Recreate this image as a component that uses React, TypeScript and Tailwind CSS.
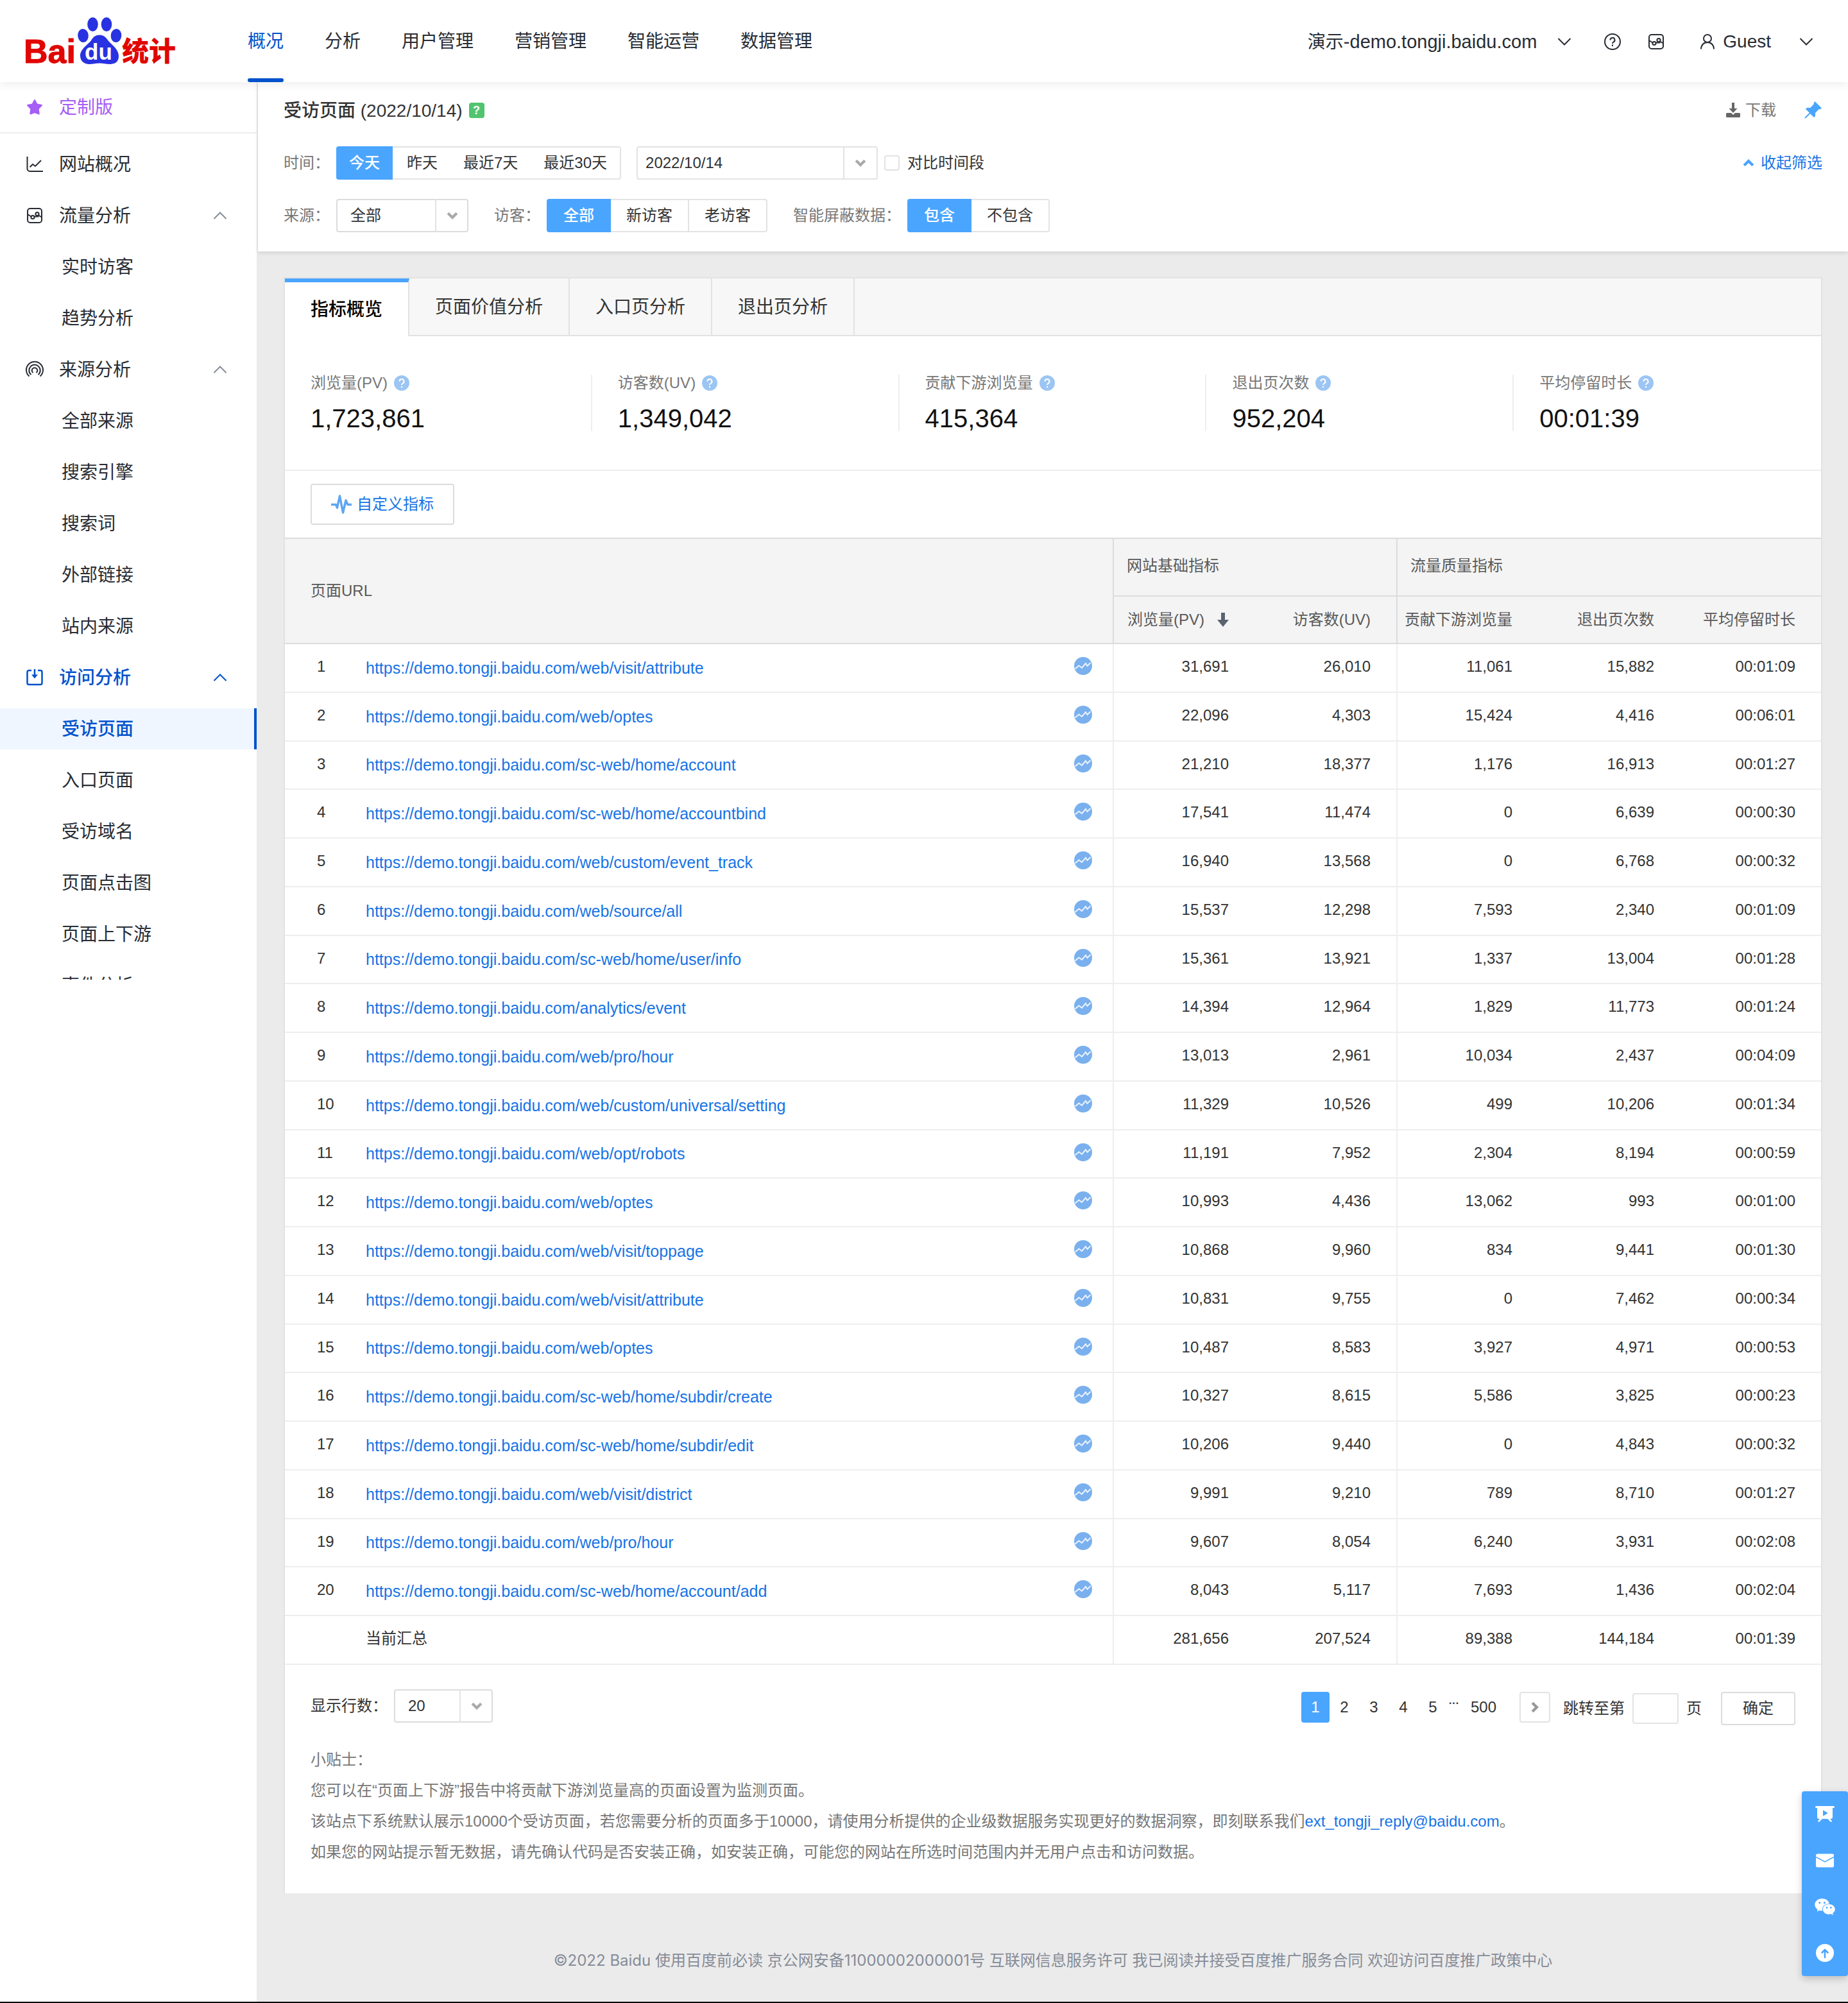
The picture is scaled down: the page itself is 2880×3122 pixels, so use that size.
import React from "react";
import { BsPinAngleFill } from "react-icons/bs";
import { AiFillWechat } from "react-icons/ai";

const topNav = ["概况", "分析", "用户管理", "营销管理", "智能运营", "数据管理"];

const rows: [string, string, string, string, string, string][] = [
  ["web/visit/attribute", "31,691", "26,010", "11,061", "15,882", "00:01:09"],
  ["web/optes", "22,096", "4,303", "15,424", "4,416", "00:06:01"],
  ["sc-web/home/account", "21,210", "18,377", "1,176", "16,913", "00:01:27"],
  ["sc-web/home/accountbind", "17,541", "11,474", "0", "6,639", "00:00:30"],
  ["web/custom/event_track", "16,940", "13,568", "0", "6,768", "00:00:32"],
  ["web/source/all", "15,537", "12,298", "7,593", "2,340", "00:01:09"],
  ["sc-web/home/user/info", "15,361", "13,921", "1,337", "13,004", "00:01:28"],
  ["analytics/event", "14,394", "12,964", "1,829", "11,773", "00:01:24"],
  ["web/pro/hour", "13,013", "2,961", "10,034", "2,437", "00:04:09"],
  ["web/custom/universal/setting", "11,329", "10,526", "499", "10,206", "00:01:34"],
  ["web/opt/robots", "11,191", "7,952", "2,304", "8,194", "00:00:59"],
  ["web/optes", "10,993", "4,436", "13,062", "993", "00:01:00"],
  ["web/visit/toppage", "10,868", "9,960", "834", "9,441", "00:01:30"],
  ["web/visit/attribute", "10,831", "9,755", "0", "7,462", "00:00:34"],
  ["web/optes", "10,487", "8,583", "3,927", "4,971", "00:00:53"],
  ["sc-web/home/subdir/create", "10,327", "8,615", "5,586", "3,825", "00:00:23"],
  ["sc-web/home/subdir/edit", "10,206", "9,440", "0", "4,843", "00:00:32"],
  ["web/visit/district", "9,991", "9,210", "789", "8,710", "00:01:27"],
  ["web/pro/hour", "9,607", "8,054", "6,240", "3,931", "00:02:08"],
  ["sc-web/home/account/add", "8,043", "5,117", "7,693", "1,436", "00:02:04"],
];

const summary = ["281,656", "207,524", "89,388", "144,184", "00:01:39"];

const stats = [
  ["浏览量(PV)", "1,723,861"],
  ["访客数(UV)", "1,349,042"],
  ["贡献下游浏览量", "415,364"],
  ["退出页次数", "952,204"],
  ["平均停留时长", "00:01:39"],
];

function Logo() {
  return (
    <svg viewBox="0 0 240 80" className="h-20 w-60 overflow-visible" aria-label="Baidu统计">
      <text x="-3" y="78" fontSize="52" fontWeight="700" fontFamily="Liberation Sans, sans-serif" fill="#e10602" stroke="#e10602">Bai</text>
      <g fill="#2932e1">
        <ellipse cx="89.500" cy="35.500" rx="8.300" ry="10.500" transform="rotate(-5 89.500 35.500)" />
        <ellipse cx="104.500" cy="18" rx="8.300" ry="11" />
        <ellipse cx="126" cy="18" rx="8.300" ry="11" />
        <ellipse cx="141" cy="35.500" rx="8.300" ry="10.500" transform="rotate(5 141 35.500)" />
        <path d="M115 34.500c7 0 10 4 13 8 4 6 17 13 17 25 0 9-6 12.500-14 12.500-6 0-10-1.500-16-1.500s-10 1.500-16 1.500c-8 0-14-5-14-13 0-11 13-18 17-24 3-4.500 6-8.500 13-8.500z" />
      </g>
      <text x="92" y="73" fontSize="35" fontWeight="700" fontFamily="Liberation Sans, sans-serif" fill="#fff">du</text>
      <text x="150" y="75" fontSize="42" fontWeight="900" fontFamily="Noto Sans CJK SC, sans-serif" fill="#e10602">统计</text>
    </svg>
  );
}

function Chevron({ className }: { className: string }) {
  return (
    <svg viewBox="0 0 22 14" fill="none" stroke="currentColor" strokeWidth="2" className={className}>
      <path d="M1.500 2L11 11.500 20.500 2" />
    </svg>
  );
}

function Caret({ className }: { className: string }) {
  return (
    <svg viewBox="0 0 20 14" fill="none" stroke="currentColor" strokeWidth="5" className={className}>
      <path d="M2 2.500l8 8 8-8" />
    </svg>
  );
}

function HelpDot() {
  return (
    <svg viewBox="0 0 24 24" className="size-6">
      <circle cx="12" cy="12" r="12" fill="#9cc5f3" />
      <path d="M8.500 9.500a3.500 3.500 0 1 1 5.200 3c-1.200.7-1.700 1.200-1.700 2.500M12 17v2.200" fill="none" stroke="#fff" strokeWidth="2" />
    </svg>
  );
}

function TrendDot() {
  return (
    <svg viewBox="0 0 28 28" className="size-7">
      <circle cx="14" cy="14" r="14" fill="#7ab0ee" />
      <path d="M1.500 18.500l6-5 4.500 3.500 6-7 2.500 4 5-5" fill="none" stroke="#fff" strokeWidth="2" strokeOpacity="0.85" />
    </svg>
  );
}

function FlowIcon({ className }: { className: string }) {
  return (
    <svg viewBox="0 0 28 28" fill="none" stroke="currentColor" strokeWidth="2" className={className}>
      <rect x="3" y="3" width="22" height="22" rx="4" />
      <circle cx="11" cy="16.500" r="2.600" />
      <circle cx="18" cy="11.500" r="2.600" />
      <path d="M3 12l5.500 3.500M13.500 15.500h7M20 13.500l5 3" />
    </svg>
  );
}

function OverviewIcon() {
  return (
    <svg viewBox="0 0 28 28" fill="none" stroke="currentColor" strokeWidth="2" className="size-7">
      <path d="M2.500 2v19a4 4 0 0 0 4 4H27M6.500 18.500l4.500-4.500 4 3 9-9" />
    </svg>
  );
}

function SourceIcon() {
  return (
    <svg viewBox="0 0 28 28" fill="none" stroke="currentColor" strokeWidth="2" className="size-7">
      <path d="M5.500 24.500a13 13 0 1 1 17 0M8.500 22a8.700 8.700 0 1 1 11 0M11.500 19a4.300 4.300 0 1 1 5 0" />
    </svg>
  );
}

function VisitIcon() {
  return (
    <svg viewBox="0 0 28 28" fill="none" stroke="currentColor" strokeWidth="2.500" className="size-7">
      <path d="M9 3H5a2.500 2.500 0 0 0-2.500 2.500v17A2.500 2.500 0 0 0 5 25h18a2.500 2.500 0 0 0 2.500-2.500v-17A2.500 2.500 0 0 0 23 3h-4M14 1v12" />
      <path d="M9 9.500h10l-5 6z" fill="currentColor" stroke="none" />
    </svg>
  );
}

function NavGroup({ icon, title, active, plain }: { icon: React.ReactNode; title: string; active?: boolean; plain?: boolean }) {
  return (
    <li className="mb-4">
      <a href="#" className={active ? "flex h-16 items-center pr-[46px] pl-10 font-medium text-[#0052cc]" : "flex h-16 items-center pr-[46px] pl-10"}>
        {icon}
        <span className="ml-6 flex-1 pt-[2px]">{title}</span>
        {!plain && <Chevron className={active ? "h-[14px] w-[22px] rotate-180" : "h-[14px] w-[22px] rotate-180 text-[#868c98]"} />}
      </a>
    </li>
  );
}

function NavItem({ title, active }: { title: string; active?: boolean }) {
  return (
    <li className="mb-4">
      <a
        href="#"
        className={
          active
            ? "flex h-16 items-center border-r-4 border-[#0052cc] bg-[#f0f6ff] pt-[2px] pl-24 font-medium text-[#0052cc]"
            : "flex h-16 items-center pt-[2px] pl-24"
        }
      >
        {title}
      </a>
    </li>
  );
}

function Segments({ items, divided }: { items: string[]; divided?: boolean }) {
  return (
    <div className="flex h-[52px]">
      {items.map((t, i) => (
        <button
          key={t}
          className={
            i === 0
              ? divided
                ? "rounded-l bg-[#4aa5ff] px-[26px] font-medium text-white"
                : "rounded-l bg-[#4aa5ff] px-5 font-medium text-white"
              : divided
                ? "border-2 border-l-0 border-[#e3e3e3] px-6 last:rounded-r"
                : "border-y-2 border-[#e3e3e3] px-5 last:rounded-r last:border-r-2 nth-2:pl-[22px]"
          }
        >
          {t}
        </button>
      ))}
    </div>
  );
}

function Dropdown({ id, value, className }: { id: string; value: string; className: string }) {
  return (
    <div className={className}>
      <select id={id} defaultValue={value} className="h-full w-full appearance-none rounded border-2 border-[#dcdcdc] bg-white pl-5 outline-none">
        <option>{value}</option>
      </select>
      <span className="pointer-events-none absolute inset-y-0 right-0 flex w-[52px] items-center justify-center border-l-2 border-[#e3e3e3] text-[#aaa]">
        <Caret className="h-3 w-[18px]" />
      </span>
    </div>
  );
}

export default function App() {
  return (
    <div
      lang="zh-CN"
      className="flex min-h-screen flex-col border-b-2 border-black bg-white font-['Liberation_Sans','Noto_Sans_CJK_SC',sans-serif] text-[24px] leading-[36px] text-[#333]"
    >
      <header className="relative z-10 flex h-32 items-center bg-white pl-10 text-[28px] text-[#282c33] shadow-[0_4px_14px_rgba(0,0,0,0.07)]">
        <a href="#" className="mt-[-8px]"><Logo /></a>
        <nav className="ml-[106px] flex h-full gap-16">
          {topNav.map((t, i) => (
            <a
              key={t}
              href="#"
              className={
                i === 0
                  ? "relative flex items-center pt-[2px] text-[#0052cc] after:absolute after:inset-x-0 after:bottom-0 after:h-[6px] after:rounded-sm after:bg-[#0052cc]"
                  : "flex items-center pt-[2px]"
              }
            >
              {t}
            </a>
          ))}
        </nav>
        <div className="ml-auto flex items-center pt-[2px] pr-[54px]">
          <button className="flex items-center">
            <span>演示<span className="text-[29px]">-demo.tongji.baidu.com</span></span>
            <Chevron className="ml-8 h-[14px] w-[22px]" />
          </button>
          <button aria-label="帮助" className="ml-[50px]">
            <svg viewBox="0 0 28 28" fill="none" stroke="currentColor" strokeWidth="2" className="size-7">
              <circle cx="14" cy="14" r="12" />
              <path d="M10.500 11.500a3.500 3.500 0 1 1 5 3c-1 .7-1.500 1.300-1.500 2.500M14 18.500v2.500" />
            </svg>
          </button>
          <button aria-label="报告" className="ml-10">
            <FlowIcon className="size-7" />
          </button>
          <button className="ml-[54px] flex items-center">
            <svg viewBox="0 0 24 26" fill="none" stroke="currentColor" strokeWidth="2" className="h-[26px] w-6">
              <circle cx="12" cy="8" r="6" />
              <path d="M2 24.500c0-6 4-10.500 10-10.500s10 4.500 10 10.500" />
            </svg>
            <span className="ml-3">Guest</span>
            <Chevron className="ml-[44px] h-[14px] w-[22px]" />
          </button>
        </div>
      </header>

      <div className="flex flex-1">
        <aside className="w-[400px] shrink-0 text-[28px] text-[#282c33]">
          <a href="#" className="flex h-20 items-center border-b-2 border-[#eee] pl-10 text-[#a65ef5]">
            <svg viewBox="0 0 28 28" fill="currentColor" stroke="currentColor" strokeWidth="2" strokeLinejoin="round" className="size-7">
              <path d="M14 3l3.500 6.500 7.500 1.500-5.300 5.500 1 8-6.700-2.500-6.700 2.500 1-8L3 11l7.500-1.500z" />
            </svg>
            <span className="ml-6 pt-[2px]">定制版</span>
          </a>
          <ul className="max-h-[1319px] overflow-hidden pt-4">
            <NavGroup plain icon={<OverviewIcon />} title="网站概况" />
            <NavGroup icon={<FlowIcon className="size-7" />} title="流量分析" />
            <NavItem title="实时访客" />
            <NavItem title="趋势分析" />
            <NavGroup icon={<SourceIcon />} title="来源分析" />
            <NavItem title="全部来源" />
            <NavItem title="搜索引擎" />
            <NavItem title="搜索词" />
            <NavItem title="外部链接" />
            <NavItem title="站内来源" />
            <NavGroup active icon={<VisitIcon />} title="访问分析" />
            <NavItem active title="受访页面" />
            <NavItem title="入口页面" />
            <NavItem title="受访域名" />
            <NavItem title="页面点击图" />
            <NavItem title="页面上下游" />
            <NavItem title="事件分析" />
          </ul>
        </aside>

        <main className="flex min-w-0 flex-1 flex-col border-l-2 border-[#ebebeb] bg-[#ebebeb]">
          <section className="bg-white px-10 pt-6 pb-[30px] shadow-[0_2px_6px_rgba(0,0,0,0.12)]">
            <div className="flex h-10 items-center">
              <h1 className="pt-[2px] text-[28px]">
                <span className="font-medium">受访页面</span> (2022/10/14)
              </h1>
              <button aria-label="说明" className="ml-[10px] size-6 rounded bg-[#52c470] text-[18px] leading-6 font-bold text-white">?</button>
              <button className="ml-auto flex items-center text-[#777]">
                <svg viewBox="0 0 22 24" fill="#666" className="mr-2 h-6 w-[22px]">
                  <path d="M9 0h4v9h4.500L11 16 4.500 9H9zM0 17.500Q0 16 1.500 16H8l3 3 3-3h6.500q1.500 0 1.500 1.500v4q0 1.500-1.500 1.500h-19Q0 23 0 21.500z" />
                </svg>
                下载
              </button>
              <button aria-label="固定" className="ml-[42px] text-[#4aa5ff]"><BsPinAngleFill size={30} /></button>
            </div>
            <div className="mt-9 flex h-[52px] items-center">
              <span className="mr-[10px] text-[#777]">时间：</span>
              <Segments items={["今天", "昨天", "最近7天", "最近30天"]} />
              <div className="ml-6 flex h-[52px] w-[376px] rounded border-2 border-[#e3e3e3]">
                <input aria-label="日期" defaultValue="2022/10/14" className="min-w-0 flex-1 pl-3 outline-none" />
                <button aria-label="选择日期" className="flex w-[52px] items-center justify-center border-l-2 border-[#e3e3e3] text-[#aaa]">
                  <Caret className="h-3 w-[18px]" />
                </button>
              </div>
              <label className="ml-[10px] flex items-center">
                <input type="checkbox" className="mr-3 size-6 appearance-none rounded border-2 border-[#e3e3e3]" />
                对比时间段
              </label>
              <button className="ml-auto flex items-center text-[#1673e6]">
                <Caret className="mr-[10px] h-3 w-[18px] rotate-180 text-[#4aa5ff]" />
                收起筛选
              </button>
            </div>
            <div className="mt-[30px] flex h-[52px] items-center">
              <label htmlFor="source" className="mr-[10px] text-[#777]">来源：</label>
              <Dropdown id="source" value="全部" className="relative h-[52px] w-[206px]" />
              <span className="mr-[10px] ml-10 text-[#777]">访客：</span>
              <Segments divided items={["全部", "新访客", "老访客"]} />
              <span className="mr-[10px] ml-10 text-[#777]">智能屏蔽数据：</span>
              <Segments divided items={["包含", "不包含"]} />
            </div>
          </section>

          <section className="mx-10 mt-10 border-2 border-b-0 border-[#e2e2e2] bg-white">
            <div className="flex h-[90px] bg-[#f7f7f7] text-[28px]">
              <button className="border-t-[6px] border-r-2 border-t-[#4aa5ff] border-r-[#e2e2e2] bg-white px-10 pt-[2px] font-medium text-black">指标概览</button>
              {["页面价值分析", "入口页分析", "退出页分析"].map((t) => (
                <button key={t} className="border-r-2 border-b-2 border-[#e2e2e2] px-10 pt-[2px]">{t}</button>
              ))}
              <div className="flex-1 border-b-2 border-[#e2e2e2]" />
            </div>

            <div className="grid grid-cols-5 border-b-2 border-[#eee] py-[60px]">
              {stats.map(([label, value]) => (
                <div key={label} className="h-[88px] border-r-2 border-[#eee] pl-10 last:border-r-0">
                  <div className="flex items-center gap-[10px] leading-[26px] text-[#777]">
                    {label}
                    <HelpDot />
                  </div>
                  <div className="mt-[22px] text-[40px] leading-10 text-[#111]">{value}</div>
                </div>
              ))}
            </div>

            <div className="px-10 py-5">
              <button className="flex h-16 w-56 items-center rounded border-2 border-[#dcdcdc] pl-[30px] text-[#1673e6]">
                <svg viewBox="0 0 32 30" fill="none" stroke="#5ea6f2" strokeWidth="3.500" strokeLinejoin="round" className="mr-2 h-[30px] w-8">
                  <path d="M0 15.500h7.500l2 5L13.500 2l5 26 4.500-19 3 6.500h6" />
                </svg>
                自定义指标
              </button>
            </div>

            <table className="w-full table-fixed border-separate border-spacing-0">
              <colgroup>
                <col className="w-[126px]" />
                <col />
                <col className="w-[100px]" />
                <col className="w-[221px]" />
                <col className="w-[221px]" />
                <col className="w-[221px]" />
                <col className="w-[221px]" />
                <col className="w-[220px]" />
              </colgroup>
              <thead className="bg-[#f4f4f4] text-[#595959]">
                <tr className="h-[92px]">
                  <th rowSpan={2} colSpan={3} className="border-y-2 border-[#dcdcdc] p-0 pl-10 text-left font-normal">页面URL</th>
                  <th colSpan={2} className="border-y-2 border-l-2 border-[#dcdcdc] p-0 pb-1 pl-5 text-left font-normal">网站基础指标</th>
                  <th colSpan={3} className="border-y-2 border-l-2 border-[#dcdcdc] p-0 pb-1 pl-5 text-left font-normal">流量质量指标</th>
                </tr>
                <tr className="h-[74px]">
                  <th className="border-b-2 border-l-2 border-[#dcdcdc] p-0 pr-10 font-normal">
                    <button className="ml-auto flex items-center gap-5">
                      浏览量(PV)
                      <svg viewBox="0 0 18 22" fill="#5a6470" className="h-[22px] w-[18px]">
                        <path d="M6 0h6v11h6l-9 11-9-11h6z" />
                      </svg>
                    </button>
                  </th>
                  <th className="border-b-2 border-[#dcdcdc] p-0 pr-10 text-right font-normal">访客数(UV)</th>
                  <th className="border-b-2 border-l-2 border-[#dcdcdc] p-0 pr-10 text-right font-normal">贡献下游浏览量</th>
                  <th className="border-b-2 border-[#dcdcdc] p-0 pr-10 text-right font-normal">退出页次数</th>
                  <th className="border-b-2 border-[#dcdcdc] p-0 pr-10 text-right font-normal">平均停留时长</th>
                </tr>
              </thead>
              <tbody>
                {rows.map(([path, ...vals], i) => (
                  <tr key={i} className="h-[76px] [&:nth-child(4n+3)]:h-[75px]">
                    <td className="border-b-2 border-[#eee] p-0 pb-1 pl-[50px]">{i + 1}</td>
                    <td className="border-b-2 border-[#eee] p-0">
                      <a href="#" className="text-[25px] text-[#1673e6]">https://demo.tongji.baidu.com/{path}</a>
                    </td>
                    <td className="border-b-2 border-[#eee] p-0 pb-[6px] pl-10">
                      <TrendDot />
                    </td>
                    {vals.map((v, c) => (
                      <td
                        key={c}
                        className={
                          c === 0 || c === 2
                            ? "border-b-2 border-l-2 border-[#eee] p-0 pr-10 pb-1 text-right"
                            : "border-b-2 border-[#eee] p-0 pr-10 pb-1 text-right"
                        }
                      >
                        {v}
                      </td>
                    ))}
                  </tr>
                ))}
                <tr className="h-[76px]">
                  <td className="border-b-2 border-[#eee] p-0" />
                  <td className="border-b-2 border-[#eee] p-0 pb-1">当前汇总</td>
                  <td className="border-b-2 border-[#eee] p-0" />
                  {summary.map((v, c) => (
                    <td
                      key={c}
                      className={
                        c === 0 || c === 2
                          ? "border-b-2 border-l-2 border-[#eee] p-0 pr-10 pb-1 text-right"
                          : "border-b-2 border-[#eee] p-0 pr-10 pb-1 text-right"
                      }
                    >
                      {v}
                    </td>
                  ))}
                </tr>
              </tbody>
            </table>

            <div className="flex h-[124px] items-start justify-between px-10 pt-[38px]">
              <div className="flex items-center">
                <label htmlFor="size" className="mr-[10px]">显示行数：</label>
                <Dropdown id="size" value="20" className="relative h-[52px] w-[154px]" />
              </div>
              <div className="flex items-center pt-1">
                <div className="flex items-center pb-1">
                  <button className="h-12 w-11 rounded bg-[#4aa5ff] font-medium text-white">1</button>
                  {["2", "3", "4", "5"].map((n) => (
                    <button key={n} className="h-12 w-[46px]">{n}</button>
                  ))}
                  <span className="mb-3 ml-[2px] text-[16px] font-bold">···</span>
                  <button className="ml-[18px]">500</button>
                  <button aria-label="下一页" className="ml-9 flex h-12 w-12 items-center justify-center rounded border-2 border-[#e3e3e3] text-[#999]">
                    <Caret className="h-3 w-[18px] -rotate-90" />
                  </button>
                </div>
                <label htmlFor="jump" className="ml-5">跳转至第</label>
                <input id="jump" className="mx-3 h-12 w-[72px] rounded border-2 border-[#e3e3e3] px-2" />
                <span>页</span>
                <button className="ml-[30px] h-[52px] w-[116px] rounded border-2 border-[#dcdcdc]">确定</button>
              </div>
            </div>

            <div className="px-10 pb-10 leading-[48px] text-[#777]">
              <p>小贴士：</p>
              <p>您可以在“页面上下游”报告中将贡献下游浏览量高的页面设置为监测页面。</p>
              <p>
                该站点下系统默认展示10000个受访页面，若您需要分析的页面多于10000，请使用分析提供的企业级数据服务实现更好的数据洞察，即刻联系我们<a href="#" className="text-[#1673e6]">ext_tongji_reply@baidu.com</a>。
              </p>
              <p>如果您的网站提示暂无数据，请先确认代码是否安装正确，如安装正确，可能您的网站在所选时间范围内并无用户点击和访问数据。</p>
            </div>
          </section>

          <footer className="pt-[85px] pb-11 text-center font-['Inter','Noto_Sans_CJK_SC',sans-serif] leading-10 text-[#868c98]">
            ©2022 Baidu 使用百度前必读 京公网安备11000002000001号 互联网信息服务许可 我已阅读并接受百度推广服务合同 欢迎访问百度推广政策中心
          </footer>
        </main>
      </div>

      <div className="fixed right-0 bottom-[42px] z-20 flex w-[72px] flex-col rounded bg-[#4aa5ff] text-white shadow-[0_4px_12px_rgba(0,0,0,0.2)]">
        <button aria-label="视频" className="flex h-[72px] items-center justify-center">
          <svg viewBox="0 0 30 26" className="h-[26px] w-[30px]">
            <path d="M1.500 1.500h27" stroke="#fff" strokeWidth="3" strokeLinecap="round" />
            <path d="M3 2h24v15q0 3-3 3H6q-3 0-3-3z" fill="#fff" />
            <path d="M10 19l-4.500 4.500M20 19l4.500 4.500" stroke="#fff" strokeWidth="2.500" strokeLinecap="round" />
            <path d="M12.500 7l6.500 4-6.500 4z" fill="#4aa5ff" stroke="#4aa5ff" strokeLinejoin="round" />
          </svg>
        </button>
        <button aria-label="邮件" className="flex h-[72px] items-center justify-center">
          <svg viewBox="0 0 28 22" className="h-[22px] w-7">
            <rect x="0" y="0.500" width="28" height="21" rx="2.500" fill="#fff" />
            <path d="M0 5.500l14 7.500 14-7.500" fill="none" stroke="#4aa5ff" strokeWidth="1.500" />
          </svg>
        </button>
        <button aria-label="微信" className="flex h-[72px] items-center justify-center">
          <AiFillWechat size={36} />
        </button>
        <button aria-label="回到顶部" className="flex h-[72px] items-center justify-center">
          <svg viewBox="0 0 28 28" className="size-7">
            <circle cx="14" cy="14" r="14" fill="#fff" />
            <path d="M14 21V9M9.500 13.500L14 9l4.500 4.500" fill="none" stroke="#4aa5ff" strokeWidth="2.500" strokeLinecap="round" strokeLinejoin="round" />
          </svg>
        </button>
      </div>
    </div>
  );
}
